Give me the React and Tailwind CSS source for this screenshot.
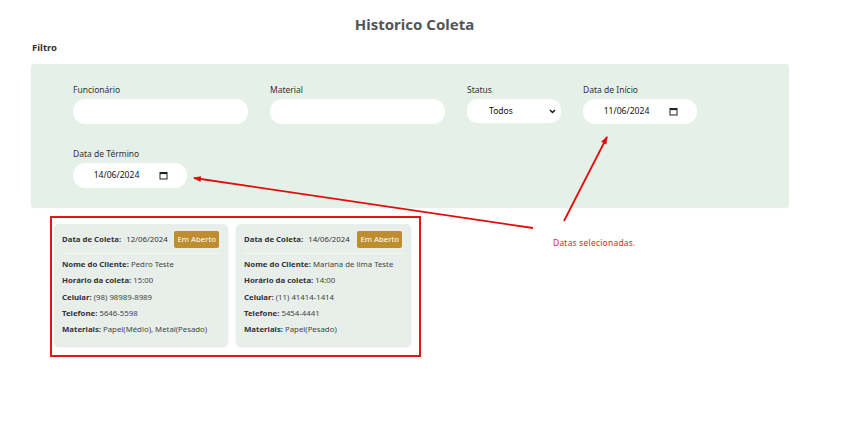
import React from "react";

const FONT = { fontFamily: '"Noto Sans", "Open Sans", sans-serif' };

const CalIcon = () => (
  <svg width="9" height="9" viewBox="0 0 9 9" className="shrink-0">
    <rect x="1" y="1.5" width="7" height="6.5" fill="none" stroke="#222" strokeWidth="1" />
    <rect x="1" y="1.5" width="7" height="1.6" fill="#222" />
  </svg>
);

const Field = ({ label, w, children }) => (
  <div className={w}>
    <label className="block text-[8.5px] leading-[12px] text-[#333] mb-[3px]">
      {label}
    </label>
    {children}
  </div>
);

const DateBox = ({ value }) => (
  <div className="h-[25px] bg-white rounded-[12px] flex items-center justify-center gap-[20px] pl-[2px] text-[8.6px] text-[#111]">
    <span>{value}</span>
    <CalIcon />
  </div>
);

const Row = ({ k, v }) => (
  <p className="text-[7.8px] leading-[16.3px] text-[#444]">
    <span className="font-bold text-[#333]">{k}</span> {v}
  </p>
);

const Card = ({ data, w }) => (
  <div className={`${w} bg-[#e8efea] rounded-[5px] shadow-[0_1px_2px_rgba(0,0,0,0.12)] px-[8px] pt-[7px] pb-[9px]`}>
    <div className="flex items-center justify-between pb-[5px] border-b border-[#f4f8f5]">
      <p className="text-[7.8px] text-[#333]">
        <span className="font-bold">Data de Coleta:</span>
        <span className="ml-[5px]">{data.date}</span>
      </p>
      <span className="bg-[#bd8d2e] text-white text-[7.8px] leading-[17px] px-[3px] rounded-[2px] mr-[1px]">
        Em Aberto
      </span>
    </div>
    <div className="pt-[2px]">
      <Row k="Nome do Cliente:" v={data.nome} />
      <Row k="Horário da coleta:" v={data.hora} />
      <Row k="Celular:" v={data.cel} />
      <Row k="Telefone:" v={data.tel} />
      <Row k="Materiais:" v={data.mat} />
    </div>
  </div>
);

const coletas = [
  {
    date: "12/06/2024",
    nome: "Pedro Teste",
    hora: "15:00",
    cel: "(98) 98989-8989",
    tel: "5646-5598",
    mat: "Papel(Médio), Metal(Pesado)",
  },
  {
    date: "14/06/2024",
    nome: "Mariana de lima Teste",
    hora: "14:00",
    cel: "(11) 41414-1414",
    tel: "5454-4441",
    mat: "Papel(Pesado)",
  },
];

export default function App() {
  return (
    <div className="relative w-[850px] h-[425px] bg-white" style={FONT}>
      <h1 className="text-center text-[15px] leading-[20px] font-bold text-[#555] pt-[14px] pr-[21px]">
        Historico Coleta
      </h1>
      <h2 className="ml-[32px] mt-[7px] text-[9.5px] leading-[13px] font-bold text-[#333]">
        Filtro
      </h2>

      <div className="ml-[31px] mt-[10px] w-[758px] h-[143px] bg-[#e5f0e8] rounded-[3px] shadow-[0_1px_1px_rgba(0,0,0,0.08)] pl-[42px] pr-[42px] pt-[20px] flex flex-wrap content-start gap-x-[22px] gap-y-[24px]">
        <Field label="Funcionário" w="w-[175px]">
          <input className="w-full h-[25px] bg-white rounded-[12px] outline-none" />
        </Field>
        <Field label="Material" w="w-[175px]">
          <input className="w-full h-[25px] bg-white rounded-[12px] outline-none" />
        </Field>
        <Field label="Status" w="w-[94px]">
          <div className="h-[24px] bg-white rounded-[10px] flex items-center justify-between pl-[22px] pr-[5px] text-[8.5px] text-[#111]">
            <span>Todos</span>
            <svg width="7" height="5" viewBox="0 0 7 5">
              <path d="M1 1l2.5 2.5L6 1" fill="none" stroke="#111" strokeWidth="1.4" />
            </svg>
          </div>
        </Field>
        <Field label="Data de Início" w="w-[114px]">
          <DateBox value="11/06/2024" />
        </Field>
        <Field label="Data de Término" w="w-[114px]">
          <DateBox value="14/06/2024" />
        </Field>
      </div>

      <div className="ml-[50px] mt-[9px] w-[371px] h-[141px] border-2 border-[#e0161b] pl-[2px] pt-[6px] flex gap-[8px]">
        <Card data={coletas[0]} w="w-[174px] h-[122px]" />
        <Card data={coletas[1]} w="w-[175px] h-[122px]" />
      </div>

      <p className="absolute left-[553px] top-[237px] text-[8.5px] tracking-[0.2px] text-[#e0252b]">
        Datas selecionadas.
      </p>

      <svg className="absolute left-0 top-0 pointer-events-none" width="850" height="425">
        <defs>
          <marker id="ah" markerWidth="8" markerHeight="6" refX="7" refY="3" orient="auto" markerUnits="userSpaceOnUse">
            <path d="M0 0L8 3L0 6z" fill="#e00d0d" />
          </marker>
        </defs>
        <line x1="564" y1="221" x2="607" y2="137" stroke="#e00d0d" strokeWidth="1.8" markerEnd="url(#ah)" />
        <line x1="533" y1="228" x2="194" y2="178" stroke="#e00d0d" strokeWidth="1.8" markerEnd="url(#ah)" />
      </svg>
    </div>
  );
}
